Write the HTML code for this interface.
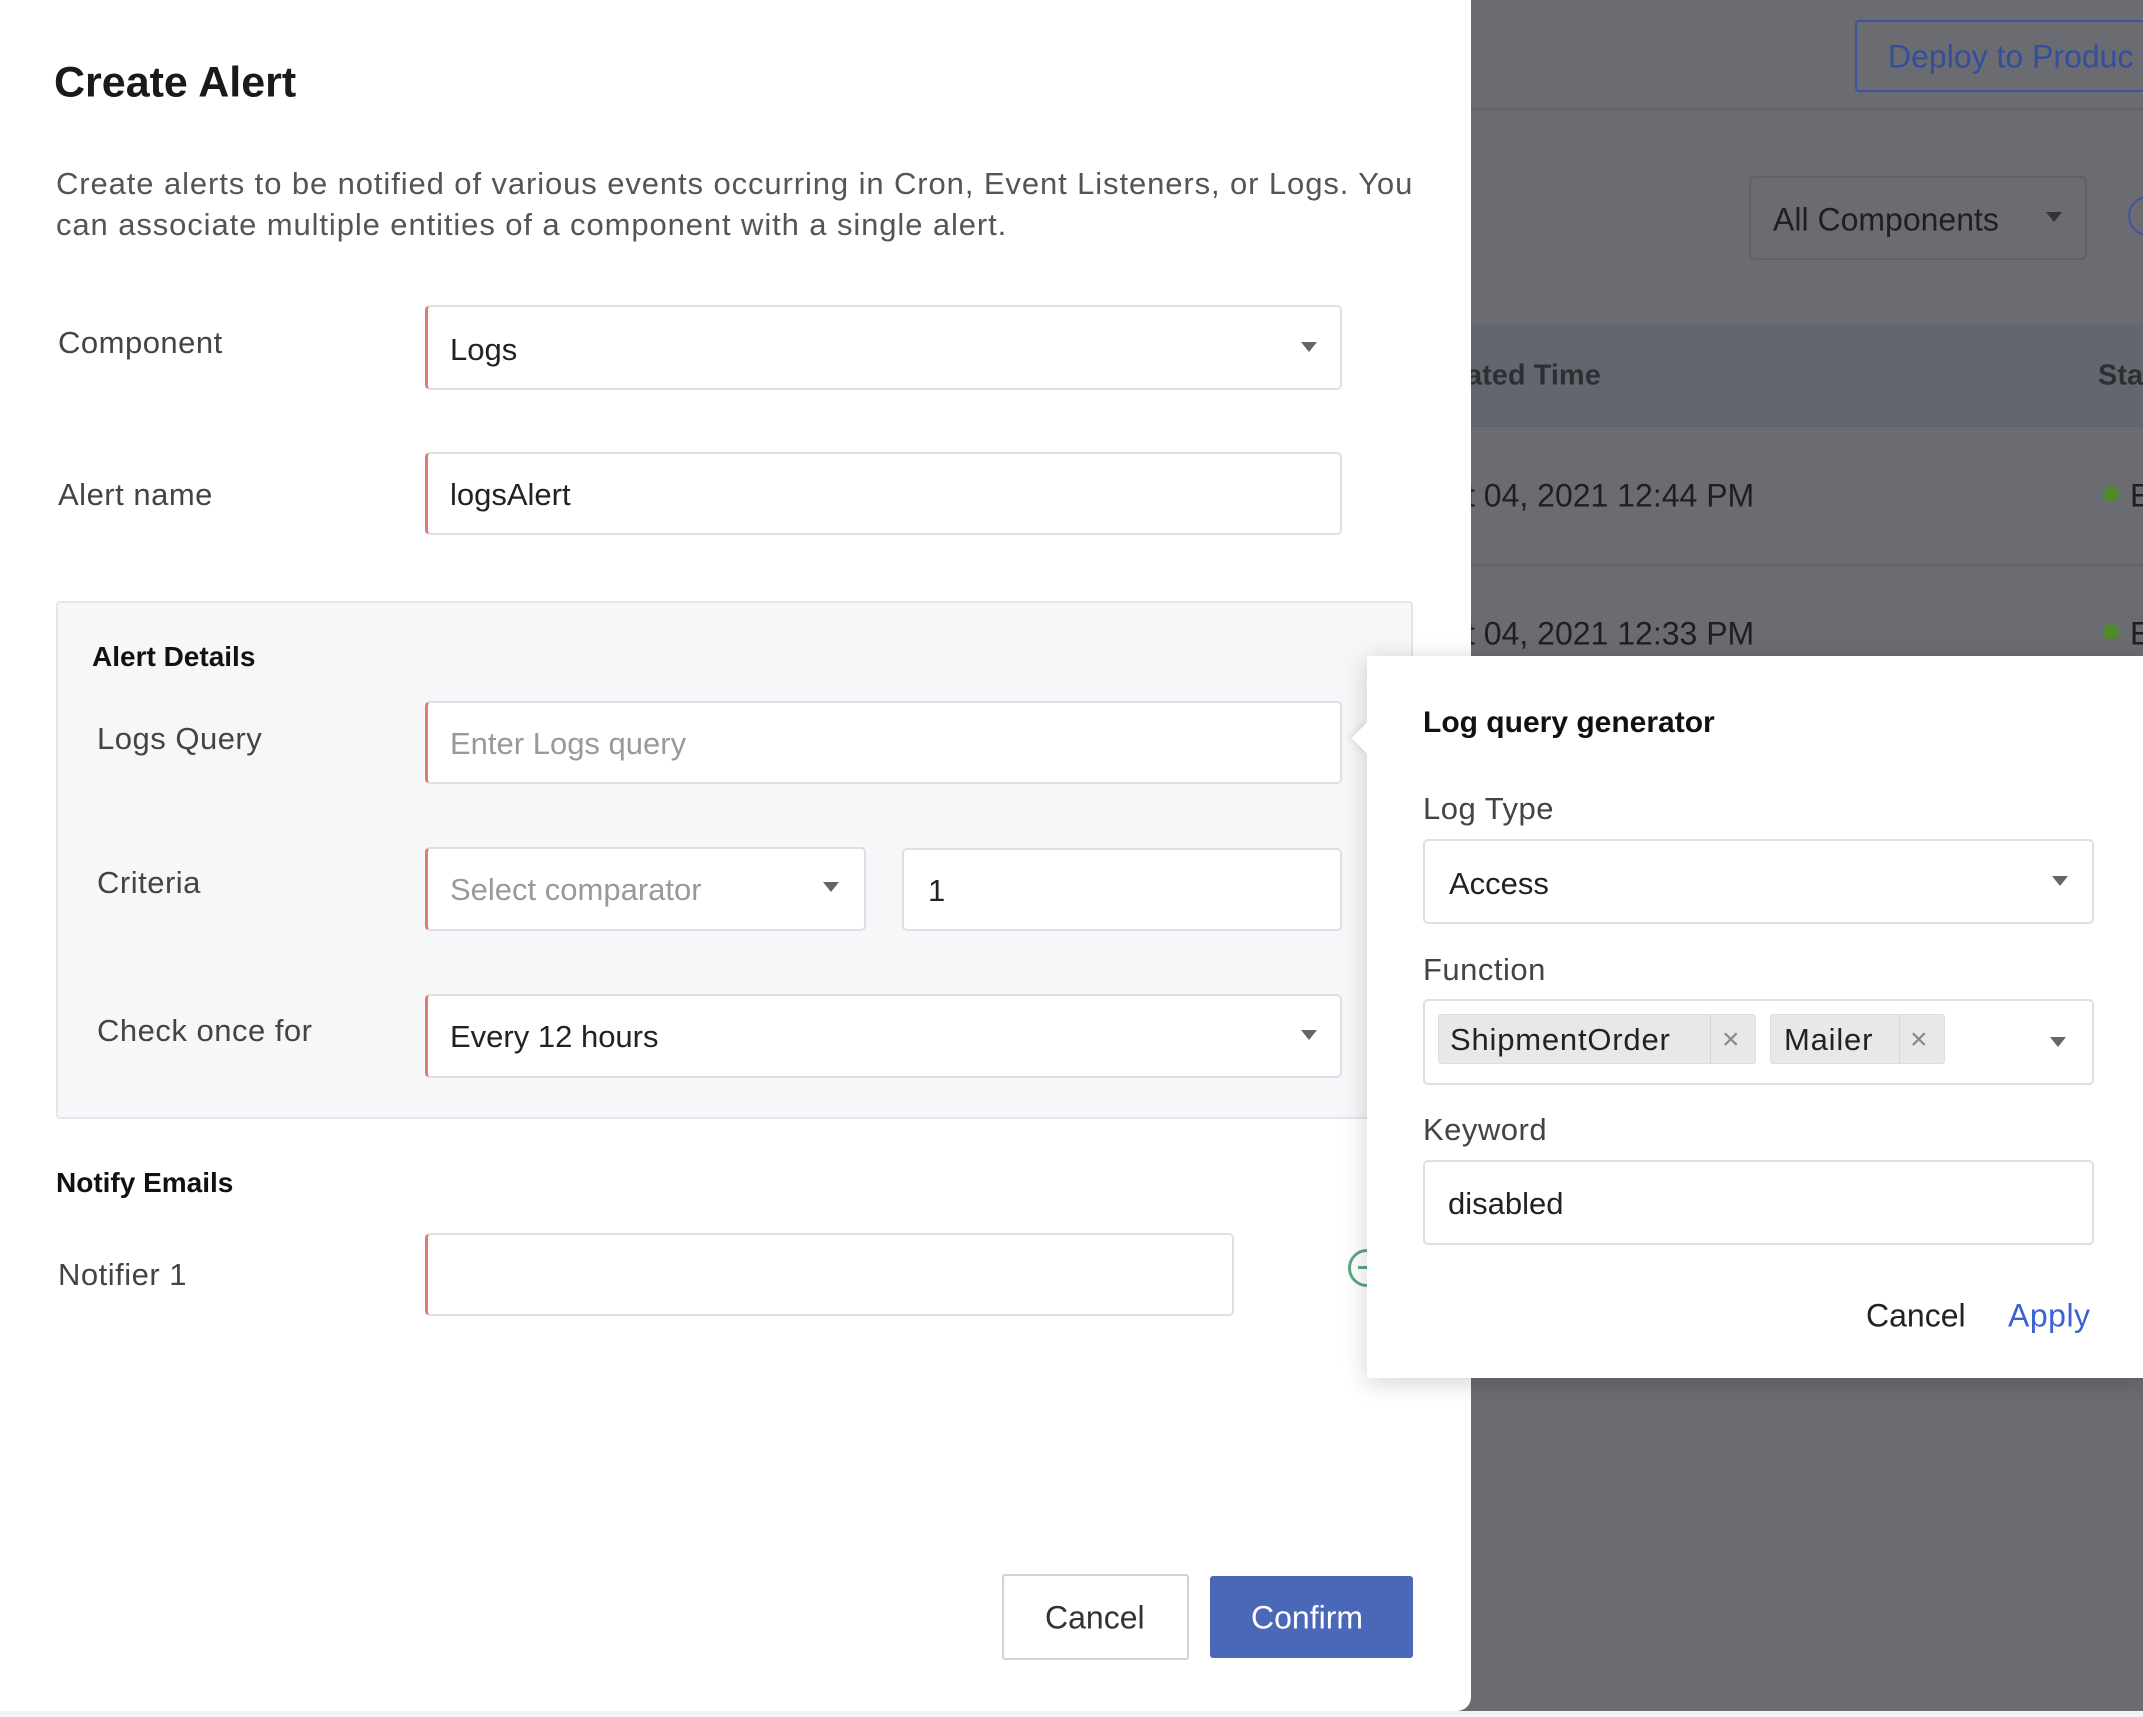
<!DOCTYPE html>
<html><head><meta charset="utf-8"><style>
*{box-sizing:border-box;margin:0;padding:0}
body{width:2143px;height:1717px;position:relative;overflow:hidden;background:#6b6c71;font-family:"Liberation Sans",sans-serif;color:#222}
.a{position:absolute}
.t{position:absolute;white-space:nowrap;transform:translateY(-50%)}
.box{position:absolute;background:#fff;border:2px solid #dcdfe6;border-radius:5px}
.req{border-left:3px solid #e07b74}
.caret{position:absolute;width:0;height:0;border-left:8px solid transparent;border-right:8px solid transparent;border-top:10px solid #666}
.lbl{font-size:31px;color:#444}
.val{font-size:31px;color:#222}
.ph{font-size:31px;color:#999}
</style></head><body>
<div class="a" style="left:1471px;top:108px;width:672px;height:2px;background:#64656b"></div>
<div class="a" style="left:1855px;top:20px;width:300px;height:72px;border:2px solid #3d55a0;border-radius:4px"></div>
<div class="t" style="left:1888px;top:57px;font-size:32px;color:#334e9c">Deploy to Produc</div>
<div class="a" style="left:1749px;top:176px;width:338px;height:84px;border:2px solid #606167;border-radius:6px"></div>
<div class="t" style="left:1773px;top:220px;font-size:32px;color:#1f1f22">All Components</div>
<div class="caret" style="left:2046px;top:212px;border-top-color:#333"></div>
<div class="a" style="left:2128px;top:196px;width:40px;height:40px;border:2px solid #3d55a0;border-radius:50%"></div>
<div class="a" style="left:1471px;top:324px;width:672px;height:101px;background:#63666f"></div>
<div class="t" style="left:1466px;top:376px;font-size:29px;font-weight:bold;color:#2e2f33">ated Time</div>
<div class="t" style="left:2098px;top:376px;font-size:29px;font-weight:bold;color:#2e2f33">Sta</div>
<div class="a" style="left:1471px;top:425px;width:672px;height:2px;background:#63646a"></div>
<div class="t" style="left:1466px;top:496px;font-size:32px;color:#1e1f22">t 04, 2021 12:44 PM</div>
<div class="a" style="left:2103px;top:486px;width:16px;height:16px;border-radius:50%;background:#4f8a2c"></div>
<div class="t" style="left:2130px;top:496px;font-size:32px;color:#1e1f22">E</div>
<div class="a" style="left:1471px;top:564px;width:672px;height:2px;background:#63646a"></div>
<div class="t" style="left:1466px;top:634px;font-size:32px;color:#1e1f22">t 04, 2021 12:33 PM</div>
<div class="a" style="left:2103px;top:624px;width:16px;height:16px;border-radius:50%;background:#4f8a2c"></div>
<div class="t" style="left:2130px;top:634px;font-size:32px;color:#1e1f22">E</div>

<div class="a" style="left:0;top:0;width:1471px;height:1711px;background:#fff;border-radius:0 0 14px 0"></div>
<div class="a" style="left:0;top:1711px;width:2143px;height:6px;background:#f4f4f5"></div>
<div class="t" style="left:54px;top:83px;font-size:43px;font-weight:bold;color:#1a1a1a">Create Alert</div>
<div class="t" style="left:56px;top:184px;font-size:31px;color:#555;letter-spacing:0.9px">Create alerts to be notified of various events occurring in Cron, Event Listeners, or Logs. You</div>
<div class="t" style="left:56px;top:225px;font-size:31px;color:#555;letter-spacing:0.9px">can associate multiple entities of a component with a single alert.</div>

<div class="t lbl" style="left:58px;top:343px;letter-spacing:0.5px">Component</div>
<div class="box req" style="left:425px;top:305px;width:917px;height:85px"></div>
<div class="t val" style="left:450px;top:350px">Logs</div>
<div class="caret" style="left:1301px;top:342px"></div>

<div class="t lbl" style="left:58px;top:495px;letter-spacing:0.5px">Alert name</div>
<div class="box req" style="left:425px;top:452px;width:917px;height:83px"></div>
<div class="t val" style="left:450px;top:495px">logsAlert</div>

<div class="a" style="left:56px;top:601px;width:1357px;height:518px;background:#f6f7f9;border:2px solid #e4e6eb;border-radius:4px"></div>
<div class="t" style="left:92px;top:657px;font-size:28px;font-weight:bold;color:#111">Alert Details</div>
<div class="t lbl" style="left:97px;top:739px;letter-spacing:0.5px">Logs Query</div>
<div class="box req" style="left:425px;top:701px;width:917px;height:83px"></div>
<div class="t ph" style="left:450px;top:744px">Enter Logs query</div>
<div class="t lbl" style="left:97px;top:883px;letter-spacing:0.5px">Criteria</div>
<div class="box req" style="left:425px;top:847px;width:441px;height:84px"></div>
<div class="t ph" style="left:450px;top:890px">Select comparator</div>
<div class="caret" style="left:823px;top:882px"></div>
<div class="box" style="left:902px;top:848px;width:440px;height:83px"></div>
<div class="t val" style="left:928px;top:891px">1</div>
<div class="t lbl" style="left:97px;top:1031px;letter-spacing:0.5px">Check once for</div>
<div class="box req" style="left:425px;top:994px;width:917px;height:84px"></div>
<div class="t val" style="left:450px;top:1037px">Every 12 hours</div>
<div class="caret" style="left:1301px;top:1030px"></div>

<div class="t" style="left:56px;top:1183px;font-size:28px;font-weight:bold;color:#111">Notify Emails</div>
<div class="t lbl" style="left:58px;top:1275px;letter-spacing:0.5px">Notifier 1</div>
<div class="box req" style="left:425px;top:1233px;width:809px;height:83px"></div>
<div class="a" style="left:1348px;top:1249px;width:38px;height:38px;border:3px solid #5aa880;border-radius:50%"></div>
<div class="a" style="left:1358px;top:1266px;width:14px;height:3px;background:#5aa880"></div>

<div class="box" style="left:1002px;top:1574px;width:187px;height:86px;border-color:#cfd2d8;border-radius:3px"></div>
<div class="t" style="left:1045px;top:1618px;font-size:32px;color:#333">Cancel</div>
<div class="a" style="left:1210px;top:1576px;width:203px;height:82px;background:#4b68b8;border-radius:3px"></div>
<div class="t" style="left:1251px;top:1618px;font-size:32px;color:#fff">Confirm</div>

<div class="a" style="left:1367px;top:656px;width:776px;height:722px;background:#fff;box-shadow:0 4px 24px rgba(0,0,0,0.18)"></div>
<div class="a" style="left:1356px;top:727px;width:22px;height:22px;background:#fff;transform:rotate(45deg);box-shadow:-3px 3px 5px rgba(0,0,0,0.06)"></div>
<div class="t" style="left:1423px;top:723px;font-size:30px;font-weight:bold;color:#111">Log query generator</div>
<div class="t lbl" style="left:1423px;top:809px;letter-spacing:0.5px">Log Type</div>
<div class="box" style="left:1423px;top:839px;width:671px;height:85px"></div>
<div class="t val" style="left:1449px;top:884px">Access</div>
<div class="caret" style="left:2052px;top:876px"></div>
<div class="t lbl" style="left:1423px;top:970px;letter-spacing:0.5px">Function</div>
<div class="box" style="left:1423px;top:999px;width:671px;height:86px"></div>
<div class="a" style="left:1438px;top:1014px;width:318px;height:50px;background:#e8e8e8;border:1px solid #dedede;border-radius:3px"></div>
<div class="a" style="left:1710px;top:1014px;width:1px;height:50px;background:#d6d6d6"></div>
<div class="t val" style="left:1450px;top:1040px;letter-spacing:0.8px">ShipmentOrder</div>
<div class="t" style="left:1722px;top:1040px;font-size:30px;color:#888">×</div>
<div class="a" style="left:1770px;top:1014px;width:175px;height:50px;background:#e8e8e8;border:1px solid #dedede;border-radius:3px"></div>
<div class="a" style="left:1899px;top:1014px;width:1px;height:50px;background:#d6d6d6"></div>
<div class="t val" style="left:1784px;top:1040px;letter-spacing:0.8px">Mailer</div>
<div class="t" style="left:1910px;top:1040px;font-size:30px;color:#888">×</div>
<div class="caret" style="left:2050px;top:1037px"></div>
<div class="t lbl" style="left:1423px;top:1130px;letter-spacing:0.5px">Keyword</div>
<div class="box" style="left:1423px;top:1160px;width:671px;height:85px"></div>
<div class="t val" style="left:1448px;top:1204px">disabled</div>
<div class="t" style="left:1866px;top:1316px;font-size:32px;color:#222">Cancel</div>
<div class="t" style="left:2008px;top:1316px;font-size:32px;color:#3a63cf;letter-spacing:0.5px">Apply</div>
</body></html>
